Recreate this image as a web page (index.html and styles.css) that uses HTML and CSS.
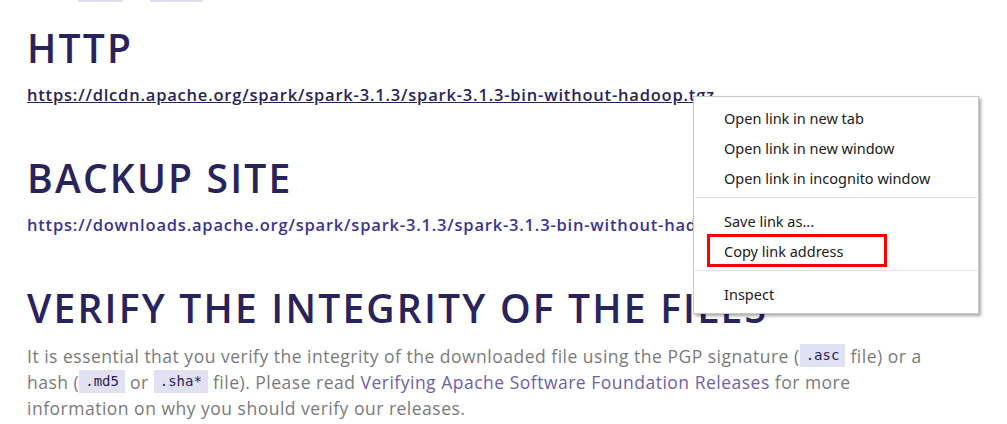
FILE: index.html
```html
<!DOCTYPE html>
<html>
<head>
<meta charset="utf-8">
<link rel="stylesheet" href="styles.css">
</head>
<body>
<div class="page">
  <div class="topcodes"><span class="tc tc1"></span><span class="tc tc2"></span></div>
  <h2 class="heading first">HTTP</h2>
  <p class="linkline"><a class="link visited" href="#">https://dlcdn.apache.org/spark/spark-3.1.3/spark-3.1.3-bin-without-hadoop.tgz</a></p>
  <h2 class="heading">BACKUP SITE</h2>
  <p class="linkline"><a class="link" href="#">https://downloads.apache.org/spark/spark-3.1.3/spark-3.1.3-bin-without-hadoop.tgz</a></p>
  <h2 class="heading">VERIFY THE INTEGRITY OF THE FILES</h2>
  <p class="para">It is essential that you verify the integrity of the downloaded file using the PGP signature (<code>.asc</code> file) or a hash (<code>.md5</code> or <code>.sha*</code> file). Please read <a class="plink" href="#">Verifying Apache Software Foundation Releases</a> for more information on why you should verify our releases.</p>
</div>
<div class="menu">
  <div class="item">Open link in new tab</div>
  <div class="item">Open link in new window</div>
  <div class="item">Open link in incognito window</div>
  <div class="sep"></div>
  <div class="item">Save link as...</div>
  <div class="item hl">Copy link address<span class="redbox"></span></div>
  <div class="sep"></div>
  <div class="item">Inspect</div>
</div>
</body>
</html>
```
FILE: styles.css
```css
html, body {
  margin: 0;
  padding: 0;
  background: #fff;
}
body {
  width: 1007px;
  height: 424px;
  overflow: hidden;
  position: relative;
  font-family: "Open Sans", "Liberation Sans", sans-serif;
}
.page {
  padding: 0 27px;
}
.topcodes {
  display: flex;
  height: 2px;
}
.tc {
  display: block;
  height: 2px;
  background: #dcdff0;
}
.tc1 { margin-left: 51px; width: 45px; }
.tc2 { margin-left: 27px; width: 53px; }
.heading {
  margin: 47px 0 0 0;
  font-size: 39px;
  line-height: 48px;
  font-weight: 600;
  color: #29235c;
  letter-spacing: 2.2px;
}
.heading.first {
  margin-top: 22px;
}
.linkline {
  margin: 11px 0 0 0;
  font-size: 16.5px;
  line-height: 24px;
}
.link {
  color: #3b3494;
  text-decoration: none;
  font-weight: 600;
  letter-spacing: 0.8px;
}
.link.visited {
  color: #29235c;
  text-decoration: underline;
}
.para {
  margin: 11px 0 0 0;
  font-size: 17.5px;
  line-height: 26px;
  color: #7a7a7a;
  width: 900px;
  letter-spacing: 0.5px;
}
.para code {
  display: inline-block;
  font-family: "DejaVu Sans Mono", monospace;
  font-size: 14px;
  line-height: 23px;
  letter-spacing: 0;
  color: #29235c;
  background: #e1e1f3;
  padding: 0 6px;
  vertical-align: top;
  margin-top: 1px;
}
.plink {
  color: #6f60a8;
  text-decoration: none;
}
.menu {
  position: absolute;
  left: 693px;
  top: 96px;
  width: 284px;
  padding: 6px 0 4px 0;
  background: #fff;
  border: 1px solid #c8c8c8;
  box-shadow: 2px 2px 3px rgba(0,0,0,0.35);
  font-family: "Noto Sans", "Noto Sans CJK KR", sans-serif;
  font-size: 14.5px;
  color: #202020;
}
.item {
  height: 30px;
  line-height: 30px;
  padding-left: 30px;
  position: relative;
}
.sep {
  height: 1px;
  background: #e0e0e0;
  margin: 4px 1px 8px 1px;
}
.redbox {
  position: absolute;
  left: 13px;
  top: -2px;
  width: 174px;
  height: 27px;
  border: 3px solid #ff0000;
}
```
